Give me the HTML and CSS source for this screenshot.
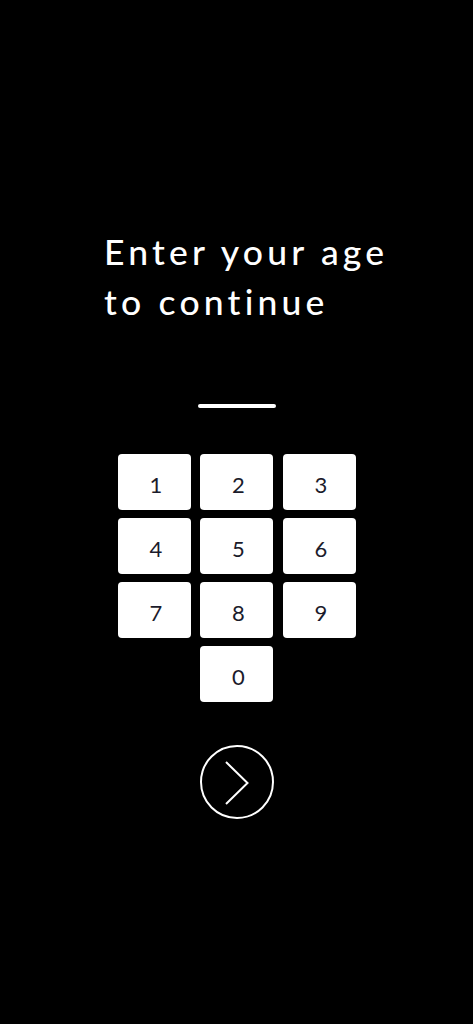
FILE: index.html
```html
<!DOCTYPE html>
<html>
<head>
<meta charset="utf-8">
<link rel="stylesheet" href="styles.css">
</head>
<body>
<main class="screen">
  <h1 class="title">Enter your age<br>to continue</h1>
  <div class="entry"></div>
  <div class="keypad">
    <button class="key">1</button>
    <button class="key">2</button>
    <button class="key">3</button>
    <button class="key">4</button>
    <button class="key">5</button>
    <button class="key">6</button>
    <button class="key">7</button>
    <button class="key">8</button>
    <button class="key">9</button>
    <button class="key zero">0</button>
  </div>
  <button class="next" aria-label="Continue">
    <svg width="76" height="76" viewBox="0 0 76 76">
      <circle cx="38" cy="38" r="36" fill="none" stroke="#fff" stroke-width="2"/>
      <path d="M27 18 L48.5 39 L27 60" fill="none" stroke="#fff" stroke-width="2"/>
    </svg>
  </button>
</main>
</body>
</html>
```
FILE: styles.css
```css
html, body {
  margin: 0;
  padding: 0;
  background: #000;
}
.screen {
  width: 473px;
  height: 1024px;
  display: flex;
  flex-direction: column;
  align-items: center;
  font-family: Lato, "Open Sans", sans-serif;
  color: #fff;
}
.title {
  align-self: flex-start;
  margin: 227px 0 0 104px;
  font-size: 35.5px;
  font-weight: 500;
  line-height: 50px;
  letter-spacing: 4.2px;
}
.entry {
  width: 78px;
  height: 4px;
  border-radius: 2px;
  background: #fff;
  margin-top: 77px;
}
.keypad {
  margin-top: 46px;
  display: grid;
  grid-template-columns: repeat(3, 73px);
  grid-auto-rows: 56px;
  column-gap: 9.5px;
  row-gap: 8px;
}
.key {
  border: none;
  border-radius: 4px;
  background: #fff;
  color: #1b1b2b;
  font-family: Lato, "Open Sans", sans-serif;
  font-size: 22px;
  padding: 4px 0 0 4px;
  margin: 0;
}
.zero {
  grid-column: 2;
}
.next {
  margin-top: 42px;
  background: none;
  border: none;
  padding: 0;
  width: 76px;
  height: 76px;
  display: block;
}
.next svg {
  display: block;
}
```
